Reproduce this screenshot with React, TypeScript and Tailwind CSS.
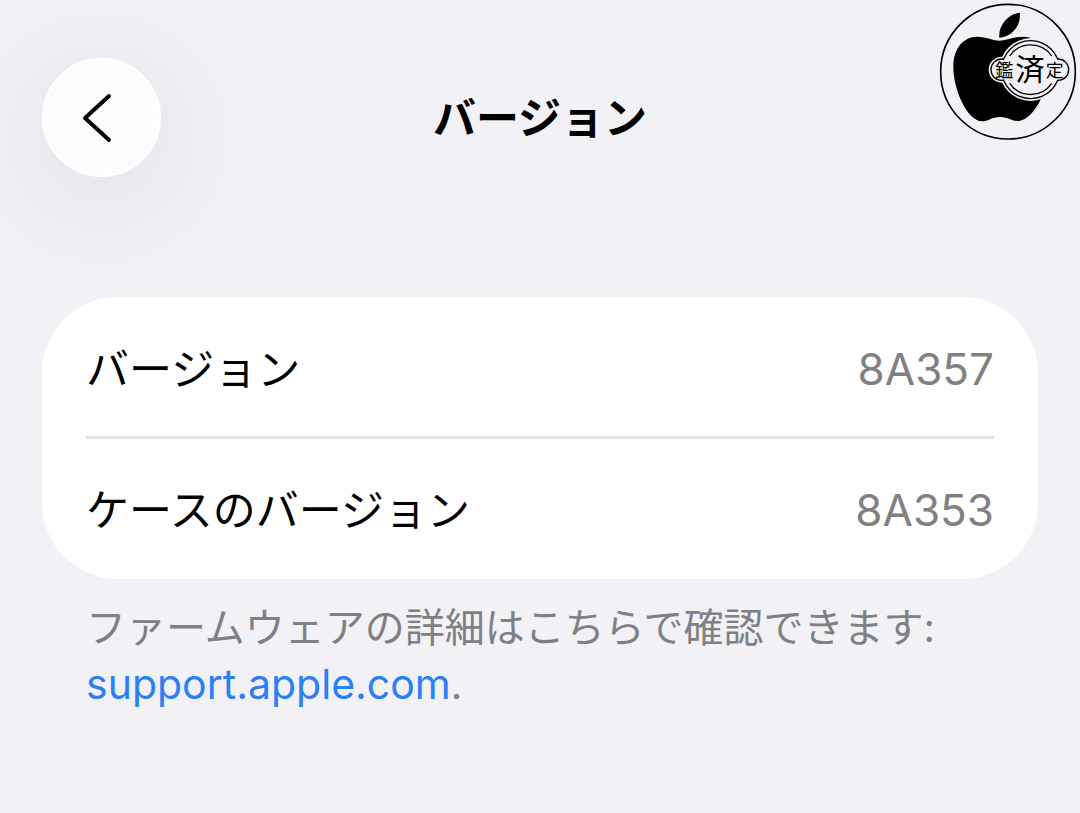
const rows = [
  { label: "バージョン", value: "8A357" },
  { label: "ケースのバージョン", value: "8A353" },
];

function BackIcon() {
  return (
    <svg
      viewBox="0 0 32 52"
      fill="none"
      stroke="currentColor"
      strokeWidth="4"
      strokeLinecap="round"
      strokeLinejoin="round"
      className="w-8 h-[52px] mr-2.5"
      aria-hidden="true"
    >
      <path d="M28 4 L4 26 L28 48" />
    </svg>
  );
}

// Three overlapping circles that form the outline of the seal
function SealShape({ grow, className }: { grow: number; className: string }) {
  return (
    <g className={className}>
      <circle cx="215" cy="209" r={31 + grow} />
      <circle cx="384" cy="209" r={31 + grow} />
      <circle cx="302" cy="209" r={86 + grow} />
    </g>
  );
}

function AppleSeal() {
  return (
    <svg
      viewBox="0 0 450 450"
      className="absolute top-0 right-0 size-[150px] text-black"
      role="img"
      aria-label="鑑済定"
    >
      <circle cx="234" cy="215" r="202" fill="none" stroke="currentColor" strokeWidth="5" />

      {/* Apple */}
      <path
        fill="currentColor"
        d="M208 113 C204 76 234 42 269 38 C275 74 245 112 208 113 Z"
      />
      <path
        fill="currentColor"
        d="M208 122 C190 122 168 110 142 110 C98 110 70 148 70 200 C70 270 112 362 156 364 C176 364 184 351 210 351 C236 351 244 364 266 363 C292 361 318 330 332 298 L300 200 L300 113 C262 103 232 122 208 122 Z"
      />

      {/* Seal */}
      <SealShape grow={8} className="fill-[#f2f1f6]" />
      <SealShape grow={3} className="fill-black" />
      <SealShape grow={-1} className="fill-[#f2f1f6]" />
      <g fill="none" stroke="currentColor" strokeWidth="4">
        <path d="M239 168 A76 76 0 0 1 365 168" />
        <path d="M239 250 A76 76 0 0 0 365 250" />
      </g>
      <g
        fill="currentColor"
        textAnchor="middle"
        className="font-['Noto_Sans_CJK_JP',sans-serif]"
      >
        <text x="223" y="230" fontSize="54">鑑</text>
        <text x="300" y="239" fontSize="88">済</text>
        <text x="374" y="230" fontSize="54">定</text>
      </g>
    </svg>
  );
}

export default function App() {
  return (
    <main
      lang="ja"
      className="relative min-h-screen overflow-hidden bg-[#f2f1f6] px-[42px] pt-[58px] pb-24 text-black font-[Inter,'Noto_Sans_CJK_JP',sans-serif]"
    >
      {/* Header */}
      <header className="grid grid-cols-[119px_1fr_119px] items-center">
        <button
          type="button"
          aria-label="戻る"
          className="flex size-[119px] items-center justify-center rounded-full border-2 border-white bg-[#fcfcff] shadow-[0_20px_110px_20px_rgba(0,0,0,0.06)]"
        >
          <BackIcon />
        </button>
        <h1 className="text-center text-[43px] leading-[60px] font-bold">バージョン</h1>
      </header>

      <AppleSeal />

      {/* Versions */}
      <dl className="relative mt-[120px] rounded-[76px] bg-white px-11 pt-0.5 divide-y-3 divide-[#e3e3e5]">
        {rows.map((row) => (
          <div key={row.label} className="flex h-[140px] items-center justify-between pt-0.5">
            <dt className="text-[43px] leading-[60px]">{row.label}</dt>
            <dd className="text-[44px] leading-[60px] text-[#808084]">{row.value}</dd>
          </div>
        ))}
      </dl>

      {/* Footnote */}
      <p className="mt-5 px-11 text-[40px] leading-[57px] text-[#808084]">
        ファームウェアの詳細はこちらで確認できます:
        <br />
        <a href="https://support.apple.com" className="text-[41px] text-[#2d7ff9]">
          support.apple.com
        </a>
        .
      </p>
    </main>
  );
}
